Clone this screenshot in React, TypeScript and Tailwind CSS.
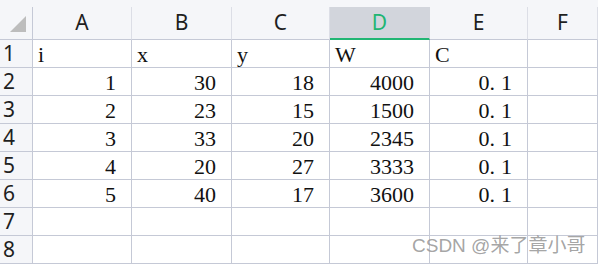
const cols = ["A", "B", "C", "D", "E", "F"];

const rows: (string | number)[][] = [
  ["i", "x", "y", "W", "C"],
  [1, 30, 18, 4000, "0.1"],
  [2, 23, 15, 1500, "0.1"],
  [3, 33, 20, 2345, "0.1"],
  [4, 20, 27, 3333, "0.1"],
  [5, 40, 17, 3600, "0.1"],
  [],
  [],
];

function CellText({ value }: { value: string | number | undefined }) {
  if (value === undefined) return null;
  if (value === "0.1") {
    return (
      <span>
        0<span className="mr-[6px]">.</span>1
      </span>
    );
  }
  return <span>{value}</span>;
}

export default function App() {
  return (
    <div className="relative w-[598px] h-[265px] overflow-hidden bg-white">
      <div className="h-[7px] bg-[#f5f6f9]" />
      <div className="grid grid-cols-[33px_99px_100px_98px_100px_98px_1fr]">
        {/* corner */}
        <div className="h-[33px] bg-[#f5f6f9] border-r border-b border-[#c5c9d6] relative">
          <div className="absolute left-[10px] top-[9px] w-0 h-0 border-l-[16px] border-l-transparent border-b-[16px] border-b-[#bdbdbd]" />
        </div>
        {cols.map((c) => (
          <div
            key={c}
            className={
              c === "D"
                ? "h-[33px] bg-[#d2d5dc] border-r border-[#d2d5dc] border-b-2 border-b-[#21b573] text-[#21b573] text-center font-['Noto_Sans',sans-serif] text-[21px] leading-[31px]"
                : "h-[33px] bg-[#f5f6f9] border-r border-b border-r-[#dcdee6] border-b-[#c5c9d6] text-[#1f1f1f] text-center font-['Noto_Sans',sans-serif] text-[21px] leading-[31px]"
            }
          >
            {c}
          </div>
        ))}
        {rows.map((r, i) => (
          <div key={i} className="contents">
            <div className="h-[28px] bg-[#f5f6f9] border-r border-b border-[#c5c9d6] pl-[3px] text-[#1f1f1f] font-['Noto_Sans',sans-serif] text-[21px] leading-[27px]">
              {i + 1}
            </div>
            {cols.map((c, j) => {
              const v = r[j];
              const right = typeof v === "number" || v === "0.1";
              return (
                <div
                  key={c}
                  className={
                    "h-[28px] border-r border-b border-[#c5c9d6] pt-[2px] font-['Liberation_Serif',serif] text-[22px] leading-[26px] text-[#111] " +
                    (right ? "text-right pr-[15px]" : "text-left pl-[5px]")
                  }
                >
                  <CellText value={v} />
                </div>
              );
            })}
          </div>
        ))}
      </div>
      <div className="absolute left-[412px] top-[234px] text-[19px] leading-[23px] text-[#9a9a9a]/90 font-['Liberation_Sans','Noto_Sans_CJK_SC',sans-serif]">
        CSDN @来了章小哥
      </div>
    </div>
  );
}
